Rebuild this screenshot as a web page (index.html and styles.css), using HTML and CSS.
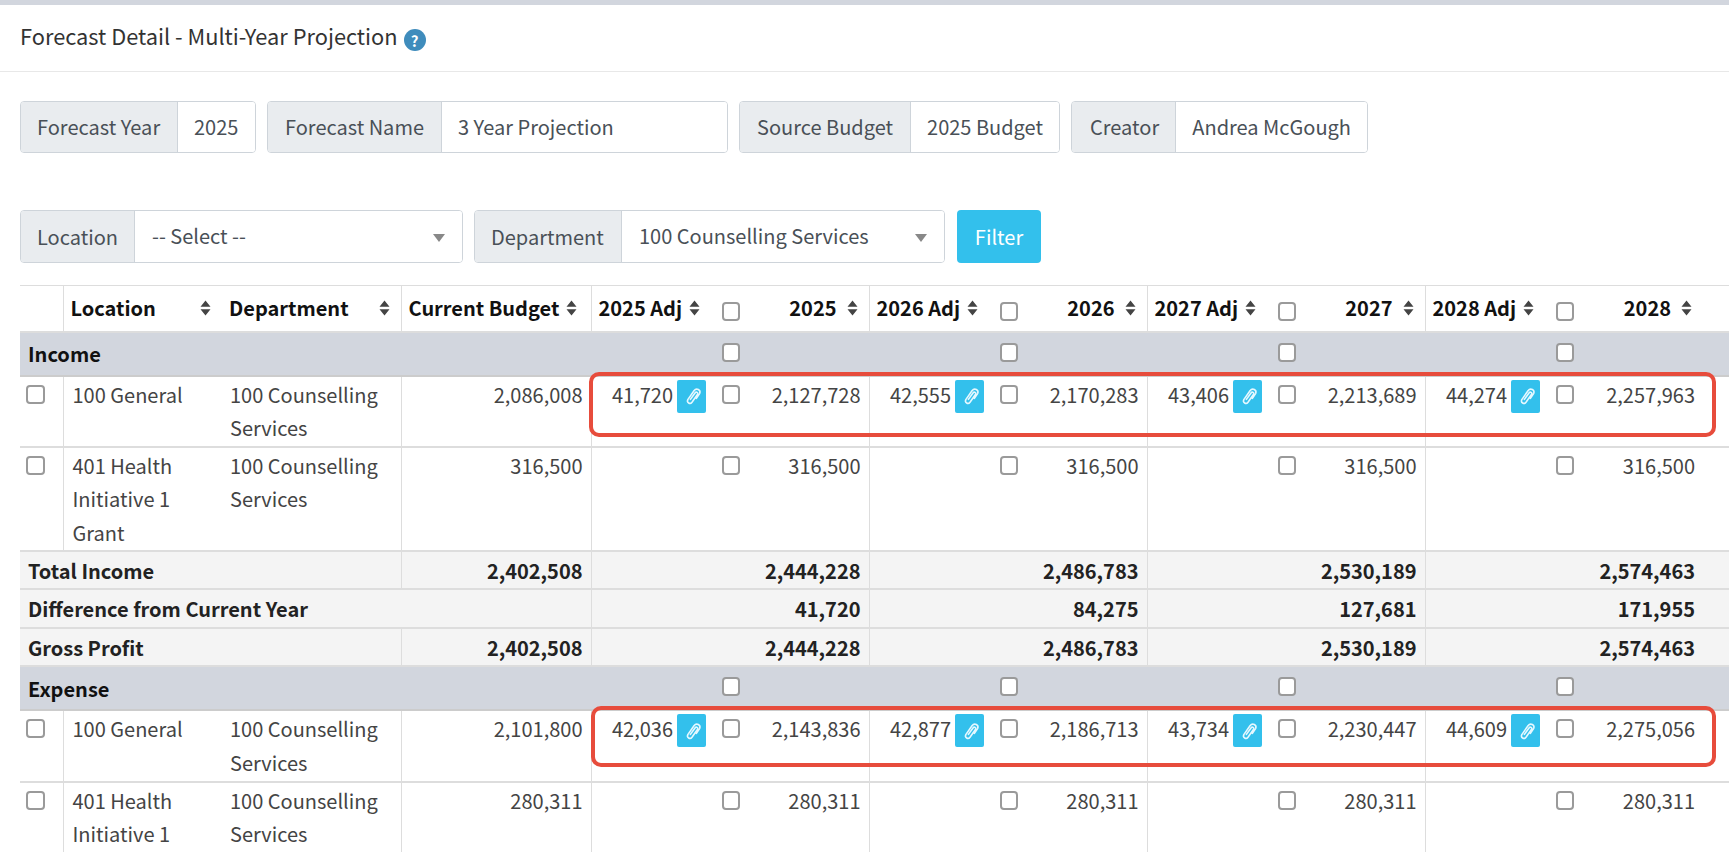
FILE: index.html
```html
<!DOCTYPE html>
<html lang="en">
<head>
<meta charset="utf-8">
<title>Forecast Detail</title>
<link rel="stylesheet" href="styles.css">
</head>
<body>
<header class="title-bar">
  <h1 class="title">Forecast Detail - Multi-Year Projection</h1>
  <span class="help">?</span>
</header>
<section class="info-row">
  <div class="group g-year"><span class="addon">Forecast Year</span><span class="value">2025</span></div>
  <div class="group g-name"><span class="addon">Forecast Name</span><span class="value">3 Year Projection</span></div>
  <div class="group g-source"><span class="addon">Source Budget</span><span class="value">2025 Budget</span></div>
  <div class="group g-creator"><span class="addon">Creator</span><span class="value">Andrea McGough</span></div>
</section>
<section class="filter-row">
  <div class="group g-loc"><span class="addon">Location</span><span class="value select">-- Select --<i class="caret"></i></span></div>
  <div class="group g-dept"><span class="addon">Department</span><span class="value select">100 Counselling Services<i class="caret"></i></span></div>
  <button class="filter-btn" type="button">Filter</button>
</section>
<main class="table-wrap">
  <table class="grid" id="grid"></table>
  <div class="mark mark-a"></div>
  <div class="mark mark-b"></div>
</main>
<script src="table.js"></script>
</body>
</html>
```
FILE: table.js
```js
const sort = '<svg class="sort" viewBox="0 0 11 16"><path d="M5.5 .5 10.5 6.8H.5ZM5.5 15.5 .5 9.2h10Z"/></svg>';
const box = '<input class="box" type="checkbox">';
const clip = '<span class="clip"><svg viewBox="0 0 20 20"><path d="M8.4 13.4 13.2 6.8c1-1.4 3.2-.3 2.4 1.4l-5.6 8c-1.9 2.5-5.6.5-4.2-2.6l6.2-8.9c2.5-3.2 7.2-.9 5.6 2.9l-3.2 4.8"/></svg></span>';
const years = [2025, 2026, 2027, 2028];

const head = '<tr class="head"><th class="c-box"></th>' +
  `<th class="b-none"><div class="th-in"><span>Location</span>${sort}</div></th>` +
  `<th class="b-none"><div class="th-in"><span>Department</span>${sort}</div></th>` +
  `<th class="th-bud"><div class="th-in"><span>Current Budget</span>${sort}</div></th>` +
  years.map(y => `<th class="y-start"><div class="th-in"><span>${y} Adj</span>${sort}</div></th><th class="c-check">${box}</th><th><div class="th-in end"><span>${y}</span>${sort}</div></th>`).join('') +
  '</tr>';

const section = name => `<tr class="section"><td colspan="4">${name}</td>` +
  years.map(() => `<td></td><td class="c-check">${box}</td><td></td>`).join('') + '</tr>';

const row = (loc, budget, cells) => `<tr class="data"><td class="c-box">${box}</td><td class="b-none">${loc}</td><td class="b-none">100 Counselling Services</td><td class="num">${budget}</td>` +
  cells.map(c => `<td class="num y-start">${c[0] ? c[0] + clip : ''}</td><td class="c-check">${box}</td><td class="num">${c[1]}</td>`).join('') + '</tr>';

const total = (label, budget, vals, cls) => `<tr class="total ${cls || ''}"><td colspan="${budget ? 3 : 4}">${label}</td>` +
  (budget ? `<td class="num">${budget}</td>` : '') +
  vals.map(v => `<td class="num y-start" colspan="3">${v}</td>`).join('') + '</tr>';

document.getElementById('grid').innerHTML =
  '<colgroup><col class="w-box"><col class="w-loc"><col class="w-dept"><col class="w-bud">' +
  years.map((y, i) => `<col class="w-adj"><col class="w-chk"><col class="${i === 3 ? 'w-last' : 'w-val'}">`).join('') + '</colgroup>' +
  head +
  section('Income') +
  row('100 General', '2,086,008', [['41,720', '2,127,728'], ['42,555', '2,170,283'], ['43,406', '2,213,689'], ['44,274', '2,257,963']]) +
  row('401 Health Initiative 1 Grant', '316,500', [['', '316,500'], ['', '316,500'], ['', '316,500'], ['', '316,500']]) +
  total('Total Income', '2,402,508', ['2,444,228', '2,486,783', '2,530,189', '2,574,463']) +
  total('Difference from Current Year', '', ['41,720', '84,275', '127,681', '171,955'], 'tall') +
  total('Gross Profit', '2,402,508', ['2,444,228', '2,486,783', '2,530,189', '2,574,463']) +
  section('Expense') +
  row('100 General', '2,101,800', [['42,036', '2,143,836'], ['42,877', '2,186,713'], ['43,734', '2,230,447'], ['44,609', '2,275,056']]) +
  row('401 Health Initiative 1 Grant', '280,311', [['', '280,311'], ['', '280,311'], ['', '280,311'], ['', '280,311']]);
```
FILE: styles.css
```css
* { box-sizing: border-box; }
html, body { margin: 0; height: 852px; overflow: hidden; background: #fff; }
body {
  font-family: "Noto Sans CJK SC", "Noto Sans", sans-serif;
  font-size: 20px;
  color: #444;
  border-top: 5px solid #d2d6de;
}
.title-bar { height: 67px; display: flex; align-items: center; padding: 0 20px 5px; gap: 6px; border-bottom: 1px solid #e8e8e8; }
.title { margin: 0; font-size: 21.8px; font-weight: 400; color: #333; line-height: 30px; }
.help { width: 22px; height: 22px; margin-top: 9px; border-radius: 50%; background: #3f8cbc; color: #fff; font-size: 15px; font-weight: 700; display: flex; align-items: center; justify-content: center; line-height: 1; }
.info-row { display: flex; gap: 11px; padding: 29px 20px 0; }
.filter-row { display: flex; gap: 11px; padding: 57px 20px 0; }
.group { display: flex; height: 52px; border: 1px solid #ced4da; border-radius: 4px; overflow: hidden; line-height: 50px; color: #495057; }
.filter-row .group { height: 53px; }
.filter-row .addon { line-height: 51px; }
.addon { background: #e9ecef; padding: 0 16px; border-right: 1px solid #ced4da; white-space: nowrap; }
.value { flex: 1; padding: 0 16px; white-space: nowrap; position: relative; background: #fff; }
.value.select { line-height: 49px; padding: 0 17px; }
.g-year { width: 236px; } .g-year .addon { width: 157px; }
.g-name { width: 461px; } .g-name .addon { width: 174px; padding-left: 17px; }
.g-source { width: 321px; } .g-source .addon { width: 173px; padding-left: 17px; }
.g-creator { width: 297px; } .g-creator .addon { width: 105px; padding-left: 18px; }
.g-loc { width: 443px; } .g-loc .addon { width: 114px; }
.g-dept { width: 471px; } .g-dept .addon { width: 147px; }
.caret { position: absolute; right: 17px; top: 23px; border: 6.5px solid transparent; border-top: 8px solid #888; border-bottom: 0; }
.filter-btn { width: 84px; height: 53px; margin-left: 1px; background: #33c0ec; color: #fff; border: 0; border-radius: 4px; font: inherit; }
.table-wrap { position: relative; margin: 22px 0 0 20px; }
.grid { table-layout: fixed; border-collapse: collapse; width: 1709px; line-height: 33.6px; color: #444; }
.w-box { width: 43px; } .w-loc { width: 158px; } .w-dept { width: 180px; } .w-bud { width: 190px; }
.w-adj { width: 123px; } .w-chk { width: 34px; } .w-val { width: 121px; } .w-last { width: 147px; }
.grid th, .grid td { border: 1px solid #ddd; padding: 0 8px; vertical-align: top; }
.grid tr > :first-child { border-left: 0; }
.grid tr > :last-child { border-right: 0; padding-right: 34px; }
.grid th { color: #111; font-weight: 700; height: 46px; vertical-align: middle; white-space: nowrap; border-bottom: 2px solid #ddd; }
.grid .b-none { border-left: 0; border-right: 0; }
.grid .c-box + .b-none { border-left: 1px solid #ddd; }
.grid th.b-none { padding: 0 10px 0 7px; }
.grid th.b-none + .b-none { padding: 0 11px 0 8px; }
.grid .c-box { padding: 0 0 0 6px; }
.grid .c-check { padding: 0; text-align: center; vertical-align: top; border-left: 0; border-right: 0; }
.grid th.c-check { vertical-align: middle; padding: 6px 0 0; }
.grid .y-start { border-left: 1px solid #ddd; border-right: 0; }
.grid th.y-start, .grid th.th-bud { padding-left: 7px; padding-right: 6px; }
.grid .y-start + .c-check, .grid .c-check + * { border-left: 0; }
.th-in { display: flex; justify-content: space-between; align-items: center; gap: 7px; }
.th-bud .th-in, .y-start .th-in { justify-content: flex-start; }
.th-in.end { justify-content: flex-end; gap: 10px; padding-right: 3px; }
.sort { width: 11px; height: 16px; fill: #444; flex: none; }
.box { appearance: none; display: block; width: 18px; height: 19px; margin: 0 auto; border: 2px solid #9a9a9a; border-radius: 4px; background: #fff; }
.c-box .box { margin: 8px 0 0; width: 19px; }
.section td { background: #d2d6de; color: #111; font-weight: 700; height: 44px; border: 0; border-bottom: 2px solid #ccc; vertical-align: middle; }
.section .c-check { padding: 0 0 3px; vertical-align: middle; }
.data td { padding-top: 1px; padding-bottom: 1px; }
.data .num { text-align: right; }
.data { border-bottom: 2px solid #ddd; }
.data .c-check { padding-top: 0; }
.data .c-check .box { margin-top: 8px; }
.data .b-none { padding-left: 9px; }
.total td { background: #f4f4f4; color: #222; font-weight: 700; height: 38px; vertical-align: middle; border-bottom: 2px solid #ddd; }
.total.tall td { height: 39px; }
.total .num { text-align: right; }
.clip { display: inline-flex; align-items: center; justify-content: center; width: 29px; height: 33px; margin: 2px 0 0 4px; background: #33c0ec; border-radius: 2px; vertical-align: top; }
.clip svg { width: 20px; height: 20px; fill: none; stroke: #e6f8ff; stroke-width: 1.6; stroke-linecap: round; stroke-linejoin: round; }
.mark { position: absolute; border: 4px solid #e74c3c; border-radius: 10px; pointer-events: none; }
.mark-a { left: 569px; top: 87px; width: 1127px; height: 65px; }
.mark-b { left: 571px; top: 421px; width: 1125px; height: 61px; }
```
